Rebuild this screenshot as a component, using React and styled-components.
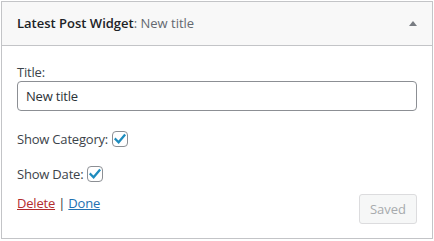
import styled, { createGlobalStyle } from "styled-components";

const GlobalStyle = createGlobalStyle`
  body {
    margin: 0;
    background: #fff;
    font-family: "Open Sans", "Noto Sans", sans-serif;
    font-size: 13px;
    color: #3c434a;
  }
`;

export const Widget = styled.div`
  box-sizing: border-box;
  width: 432px;
  margin: 1px;
  border: 1px solid #c3c4c7;
  background: #fff;
`;

export const WidgetTop = styled.div`
  display: flex;
  align-items: center;
  justify-content: space-between;
  height: 43px;
  padding: 0 15px;
  background: #f8f8f8;
  border-bottom: 1px solid #c3c4c7;
`;

export const WidgetTitle = styled.h3`
  margin: 0;
  font-size: 13px;
  font-weight: 600;
  line-height: 1;
  color: #1d2327;
`;

export const InTitle = styled.span`
  font-weight: 400;
  color: #646970;
`;

export const Toggle = styled.span`
  width: 0;
  height: 0;
  border-left: 4px solid transparent;
  border-right: 4px solid transparent;
  border-bottom: 5px solid #787c82;
`;

export const WidgetInside = styled.div`
  padding: 17px 15px 14px;
  letter-spacing: -0.2px;
`;

export const Label = styled.label`
  display: block;
  line-height: 18px;
  color: #3c434a;
`;

export const TextInput = styled.input`
  box-sizing: border-box;
  display: block;
  width: 100%;
  height: 30px;
  padding: 0 8px;
  border: 1px solid #8c8f94;
  border-radius: 4px;
  font-family: inherit;
  font-size: 13px;
  letter-spacing: inherit;
  color: #2c3338;
  outline: none;
`;

export const CheckRow = styled.div`
  display: flex;
  align-items: center;
  gap: 4px;
  height: 18px;
  margin-top: ${(p) => p.$gap}px;
`;

export const Box = styled.span`
  box-sizing: border-box;
  display: flex;
  align-items: center;
  justify-content: center;
  width: 16px;
  height: 16px;
  border: 1px solid #8c8f94;
  border-radius: 4px;
  background: #fff;
`;

export const Footer = styled.div`
  display: flex;
  justify-content: space-between;
  align-items: flex-start;
  margin-top: 11px;
`;

export const Links = styled.div`
  line-height: 18px;
  color: #2c3338;
`;

export const Link = styled.a`
  color: ${(p) => (p.$danger ? "#b32d2e" : "#2271b1")};
  text-decoration: underline;
  cursor: pointer;
`;

export const SaveButton = styled.button`
  height: 30px;
  padding: 0 10px;
  border: 1px solid #dcdcde;
  border-radius: 3px;
  background: #f6f7f7;
  color: #a7aaad;
  font-family: inherit;
  font-size: 13px;
`;

const Check = () => (
  <Box>
    <svg width="14" height="14" viewBox="0 0 14 14">
      <path
        d="M2.6 7.2 L5.6 10.2 L11.4 3.4"
        fill="none"
        stroke="#1e8cbe"
        strokeWidth="2.3"
        strokeLinecap="square"
      />
    </svg>
  </Box>
);

const App = () => {
  return (
    <>
      <GlobalStyle />
      <Widget>
        <WidgetTop>
          <WidgetTitle>
            Latest Post Widget<InTitle>: New title</InTitle>
          </WidgetTitle>
          <Toggle />
        </WidgetTop>
        <WidgetInside>
          <Label>Title:</Label>
          <TextInput defaultValue="New title" />
          <CheckRow $gap={19}>
            <span>Show Category:</span>
            <Check />
          </CheckRow>
          <CheckRow $gap={17}>
            <span>Show Date:</span>
            <Check />
          </CheckRow>
          <Footer>
            <Links>
              <Link $danger>Delete</Link> | <Link>Done</Link>
            </Links>
            <SaveButton disabled>Saved</SaveButton>
          </Footer>
        </WidgetInside>
      </Widget>
    </>
  );
};

export default App;
